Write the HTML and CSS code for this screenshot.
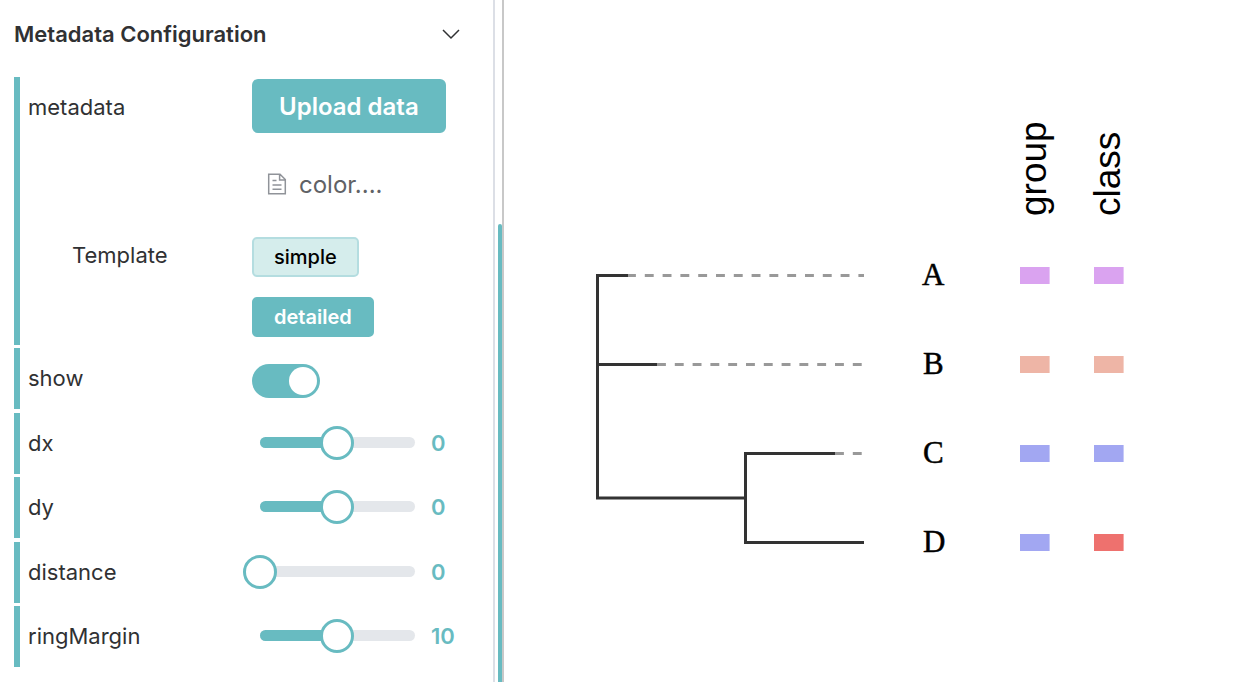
FILE: index.html
```html
<!DOCTYPE html>
<html lang="en">
<head>
<meta charset="utf-8">
<title>Metadata Configuration</title>
<link rel="stylesheet" href="styles.css">
</head>
<body>
<div class="app">
  <aside class="panel">
    <button class="panel-header" type="button" aria-expanded="true">
      <span>Metadata Configuration</span>
      <svg class="chevron" viewBox="0 0 18 12" aria-hidden="true"><path d="M1 2 L9 10 L17 2"/></svg>
    </button>
    <div class="rows">
      <section class="group">
        <div class="row upload-row">
          <span class="label">metadata</span>
          <div class="control">
            <button class="upload" type="button">Upload data</button>
            <a class="file" href="#">
              <svg class="doc" viewBox="0 0 20 22" aria-hidden="true"><path d="M1.7 1.2H13L18.3 6.5V20.8H1.7ZM12.6 1.2V7H18.3M5.5 7.5H9.5M5.5 12H14.5M5.5 16.3H14.5"/></svg>
              <span>color....</span>
            </a>
          </div>
        </div>
        <div class="row template-row">
          <span class="label sub">Template</span>
          <div class="control">
            <button class="tag plain" type="button">simple</button>
            <button class="tag" type="button">detailed</button>
          </div>
        </div>
      </section>
      <section class="row item">
        <label class="label" for="show">show</label>
        <div class="control"><input class="switch" id="show" type="checkbox" role="switch" checked></div>
      </section>
      <section class="row item">
        <label class="label" for="dx">dx</label>
        <div class="slider"><span class="track"><span class="fill" style="width:50%"></span></span><input id="dx" type="range" min="-100" max="100" value="0"></div>
        <output class="value" for="dx">0</output>
      </section>
      <section class="row item">
        <label class="label" for="dy">dy</label>
        <div class="slider"><span class="track"><span class="fill" style="width:50%"></span></span><input id="dy" type="range" min="-100" max="100" value="0"></div>
        <output class="value" for="dy">0</output>
      </section>
      <section class="row item">
        <label class="label" for="distance">distance</label>
        <div class="slider"><span class="track"><span class="fill" style="width:0%"></span></span><input id="distance" type="range" min="0" max="100" value="0"></div>
        <output class="value" for="distance">0</output>
      </section>
      <section class="row item">
        <label class="label" for="ring">ringMargin</label>
        <div class="slider"><span class="track"><span class="fill" style="width:50%"></span></span><input id="ring" type="range" min="0" max="20" value="10"></div>
        <output class="value" for="ring">10</output>
      </section>
    </div>
  </aside>
  <div class="scrollbar"><div class="thumb"></div></div>
  <main class="canvas">
    <svg class="tree" viewBox="504 0 738 682" role="img" aria-label="Tree with group and class annotations">
      <g class="guides">
        <path d="M627 275.5H864"/>
        <path d="M657 364.5H864"/>
        <path d="M835 453.5H864"/>
      </g>
      <path class="branches" d="M628 275.5H597.5V498H745.5M597.5 364.5H657M835 453.5H745.5V542.5H864"/>
      <g class="leaves">
        <text x="922" y="285">A</text>
        <text x="923" y="374">B</text>
        <text x="923" y="463">C</text>
        <text x="923" y="552">D</text>
      </g>
      <g class="heads">
        <text transform="translate(1046 216) rotate(-90)">group</text>
        <text transform="translate(1120 216) rotate(-90)">class</text>
      </g>
      <g class="violet"><rect x="1020" y="267" width="29.6" height="17"/><rect x="1094" y="267" width="29.6" height="17"/></g>
      <g class="peach"><rect x="1020" y="356" width="29.6" height="17"/><rect x="1094" y="356" width="29.6" height="17"/></g>
      <g class="blue"><rect x="1020" y="445" width="29.6" height="17"/><rect x="1094" y="445" width="29.6" height="17"/><rect x="1020" y="534" width="29.6" height="17"/></g>
      <rect class="red" x="1094" y="534" width="29.6" height="17"/>
    </svg>
  </main>
</div>
</body>
</html>
```

FILE: styles.css
```css
* { box-sizing: border-box; }

:root {
  --teal: #68bbc1;
  --ink: #303133;
}

body {
  margin: 0;
  background: #fff;
  color: var(--ink);
  font-family: Inter, "Liberation Sans", sans-serif;
  font-size: 22px;
  overflow: hidden;
}

button, a {
  font: inherit;
  color: inherit;
  text-decoration: none;
}

.app {
  display: flex;
  min-height: 100vh;
}

.panel {
  flex: 0 0 495px;
  border-right: 2px solid #dcdfe6;
  padding: 0 33px 0 14px;
}

.panel-header {
  display: flex;
  align-items: center;
  justify-content: space-between;
  width: 100%;
  height: 68px;
  padding: 0;
  border: 0;
  background: none;
  font-weight: 600;
}

.chevron {
  width: 18px;
  height: 12px;
  fill: none;
  stroke: var(--ink);
  stroke-width: 1.5;
}

.rows { padding-top: 9px; }

.group, .item { border-left: 6px solid var(--teal); }

.group { margin-bottom: 3px; }

.row {
  display: grid;
  grid-template-columns: 215px 188px 1fr;
  padding-left: 8px;
}

.item {
  height: 61px;
  align-items: center;
  margin-bottom: 3px;
  padding-bottom: 2px;
}

.item:nth-child(even) { margin-bottom: 4px; }

.upload-row { padding-top: 2px; }

.upload-row .label { line-height: 56px; }

.template-row {
  padding-top: 38px;
  padding-bottom: 8px;
}

.sub {
  padding-left: 44px;
  line-height: 36px;
}

.control {
  display: flex;
  flex-direction: column;
  align-items: flex-start;
  grid-column: 2 / 4;
  padding-left: 9px;
}

.upload {
  height: 54px;
  padding: 0 27px;
  border: 0;
  border-radius: 6px;
  background: var(--teal);
  color: #fff;
  font-size: 24px;
  font-weight: 600;
}

.file {
  display: flex;
  align-items: center;
  gap: 12px;
  height: 30px;
  margin-top: 36px;
  padding-left: 15px;
  color: #606266;
  font-size: 24px;
}

.doc {
  width: 20px;
  height: 22px;
  fill: none;
  stroke: #909399;
  stroke-width: 1.5;
}

.tag {
  height: 40px;
  margin-bottom: 20px;
  padding: 0 20px;
  border: 2px solid var(--teal);
  border-radius: 5px;
  background: var(--teal);
  color: #fff;
  font-size: 20px;
  font-weight: 600;
}

.tag:last-child { margin-bottom: 0; }

.plain {
  border-color: #b4dde0;
  background: #d5edec;
  color: #000;
  font-weight: 500;
}

.switch {
  display: flex;
  align-items: center;
  justify-content: flex-end;
  appearance: none;
  width: 68px;
  height: 34px;
  margin: 6px 0 0;
  padding: 3px;
  border-radius: 17px;
  background: var(--teal);
}

.switch::before {
  content: "";
  width: 28px;
  height: 28px;
  border-radius: 50%;
  background: #fff;
}

.slider {
  display: grid;
  align-items: center;
}

.track, .slider input { grid-area: 1 / 1; }

.track {
  height: 11px;
  margin: 0 16px 0 17px;
  border-radius: 6px;
  background: #e4e7eb;
  overflow: hidden;
}

.fill {
  display: block;
  height: 100%;
  background: var(--teal);
}

.slider input {
  appearance: none;
  width: 100%;
  height: 34px;
  margin: 0;
  background: transparent;
}

.slider input::-webkit-slider-thumb {
  appearance: none;
  width: 34px;
  height: 34px;
  border: 3px solid var(--teal);
  border-radius: 50%;
  background: #fff;
}

.value {
  color: var(--teal);
  font-weight: 600;
}

.scrollbar {
  flex: 0 0 9px;
  padding: 224px 0 0 3px;
  border-right: 2px solid #c8c8c8;
  display: flex;
}

.thumb {
  flex: 1;
  border-radius: 2px 2px 0 0;
  background: var(--teal);
}

.canvas {
  flex: 1;
  min-width: 0;
}

.tree {
  display: block;
  width: 100%;
  height: auto;
}

.branches {
  fill: none;
  stroke: #333;
  stroke-width: 3;
}

.guides {
  fill: none;
  stroke: #999;
  stroke-width: 3;
  stroke-dasharray: 8.9;
}

.leaves {
  font-family: "Liberation Serif", serif;
  font-size: 31px;
  stroke: #000;
  stroke-width: 0.5;
}

.heads {
  font-family: "Liberation Sans", sans-serif;
  font-size: 37px;
}

.violet { fill: #daa3f0; }
.peach { fill: #eeb5a6; }
.blue { fill: #a2a7f2; }
.red { fill: #ee716e; }
```
